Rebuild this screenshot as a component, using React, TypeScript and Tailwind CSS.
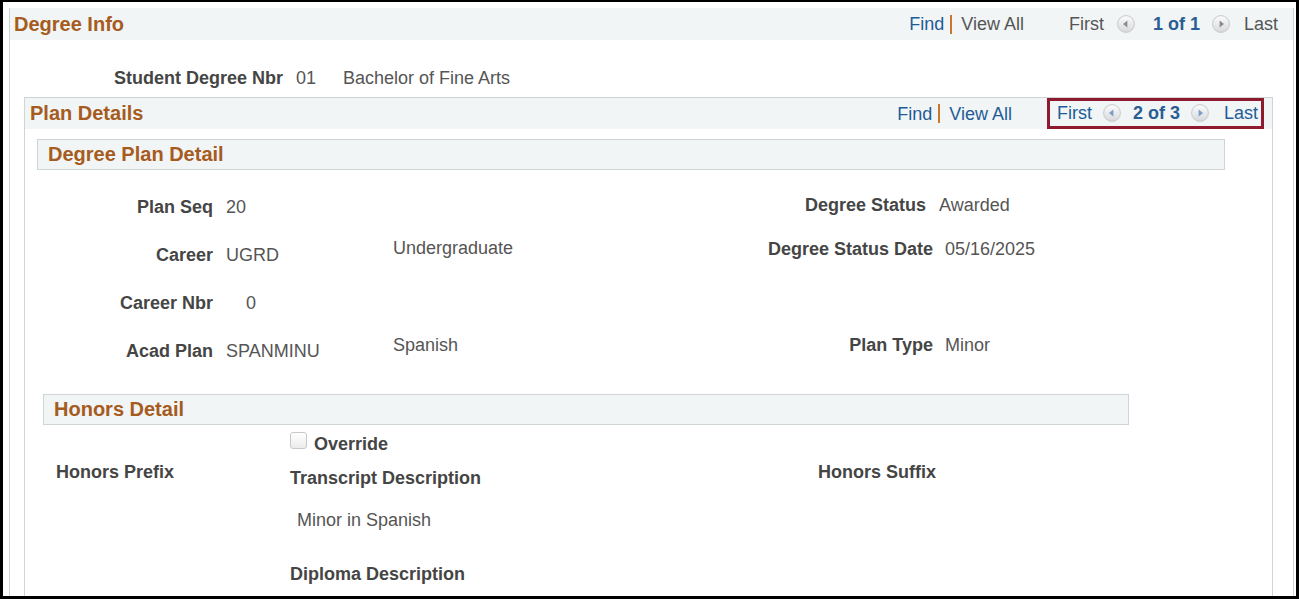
import React from "react";

function NavBtn({ dir, active }: { dir: "l" | "r"; active?: boolean }) {
  const fill = active ? "#7c9dc6" : "#8c8c8c";
  const id = `g${dir}${active ? 1 : 0}`;
  return (
    <svg width="18" height="18" viewBox="0 0 18 18" className="shrink-0">
      <defs>
        <linearGradient id={id} x1="0" y1="0" x2="0" y2="1">
          <stop offset="0" stopColor="#fcfcfc" />
          <stop offset="1" stopColor="#d6d8da" />
        </linearGradient>
      </defs>
      <circle cx="9" cy="9" r="8.4" fill={`url(#${id})`} stroke="#c6c9cc" strokeWidth="1" />
      {dir === "l" ? (
        <path d="M6 9 L10.4 5.5 L10.4 12.5 Z" fill={fill} />
      ) : (
        <path d="M12 9 L7.6 5.5 L7.6 12.5 Z" fill={fill} />
      )}
    </svg>
  );
}

function Sep() {
  return <span className="inline-block w-[2px] h-[19px] bg-[#c8772f] ml-[6px] mr-[9px]" />;
}

const label = "font-bold text-[18px] leading-[20px] text-[#454545] whitespace-nowrap";
const value = "text-[18px] leading-[20px] text-[#555555] whitespace-nowrap";
const sectionTitle = "font-bold text-[20px] leading-[24px] text-[#a65b20] whitespace-nowrap";

export default function App() {
  return (
    <div className="w-[1299px] h-[599px] overflow-hidden bg-white border-black border-l-[3px] border-t-2 border-r-[3px] border-b-[3px] font-['Liberation_Sans',Arial,sans-serif]">
      <div className="ml-[6px] mt-[6px] w-[1285px] h-[700px] border-x border-[#cfd4d6]">
        {/* Degree Info header */}
        <div className="h-[32px] bg-[#f1f5f6] flex items-center justify-between pl-[4px] pr-[15px]">
          <span className={sectionTitle}>Degree Info</span>
          <div className="flex items-center text-[18px] leading-[20px]">
            <span className="text-[#1f5c97]">Find</span>
            <Sep />
            <span className="text-[#555]">View All</span>
            <span className="text-[#555] ml-[45px]">First</span>
            <span className="ml-[13px] flex"><NavBtn dir="l" /></span>
            <span className="ml-[18px] font-bold text-[#2a5d93]">1 of 1</span>
            <span className="ml-[12px] flex"><NavBtn dir="r" /></span>
            <span className="ml-[14px] text-[#555]">Last</span>
          </div>
        </div>

        {/* Student Degree Nbr */}
        <div className="flex mt-[28px] h-[20px]">
          <div className={`${label} w-[273px] text-right`}>Student Degree Nbr</div>
          <div className={`${value} ml-[13px] w-[47px]`}>01</div>
          <div className={value}>Bachelor of Fine Arts</div>
        </div>

        {/* Plan Details box */}
        <div className="ml-[14px] mt-[9px] w-[1249px] h-[600px] border-x border-t border-[#cfd4d6]">
          <div className="h-[31px] bg-[#f1f5f6] flex items-center justify-between pl-[5px] pr-[8px]">
            <span className={`${sectionTitle} -mt-[2px]`}>Plan Details</span>
            <div className="flex items-center h-full text-[18px] leading-[20px]">
              <span className="text-[#1f5c97]">Find</span>
              <Sep />
              <span className="text-[#1f5c97]">View All</span>
              <div className="ml-[35px] h-[31px] border-[3px] border-[#8e1a2f] flex items-center pl-[7px] pr-[3px]">
                <span className="text-[#1f5c97] -mt-[2px]">First</span>
                <span className="ml-[11px] -mt-[2px] flex"><NavBtn dir="l" active /></span>
                <span className="ml-[12px] font-bold text-[#2a5d93] -mt-[2px]">2 of 3</span>
                <span className="ml-[11px] -mt-[2px] flex"><NavBtn dir="r" active /></span>
                <span className="ml-[15px] text-[#1f5c97] -mt-[2px]">Last</span>
              </div>
            </div>
          </div>

          {/* Degree Plan Detail */}
          <div className="ml-[12px] mt-[10px] w-[1188px] h-[31px] border border-[#cfd4d6] bg-[#f1f5f6] flex items-center pl-[10px]">
            <span className={`${sectionTitle} -mt-[2px]`}>Degree Plan Detail</span>
          </div>

          <div className="mt-[15px] flex flex-col">
            {/* Row 1 */}
            <div className="flex h-[48px] items-start">
              <div className={`${label} w-[188px] text-right pt-[12px]`}>Plan Seq</div>
              <div className={`${value} ml-[13px] w-[167px] pt-[12px]`}>20</div>
              <div className="w-[307px]" />
              <div className={`${label} w-[226px] text-right pt-[10px]`}>Degree Status</div>
              <div className={`${value} ml-[13px] pt-[10px]`}>Awarded</div>
            </div>
            {/* Row 2 */}
            <div className="flex h-[48px] items-start">
              <div className={`${label} w-[188px] text-right pt-[12px]`}>Career</div>
              <div className={`${value} ml-[13px] w-[167px] pt-[12px]`}>UGRD</div>
              <div className={`${value} w-[307px] pt-[5px]`}>Undergraduate</div>
              <div className={`${label} w-[233px] text-right pt-[6px]`}>Degree Status Date</div>
              <div className={`${value} ml-[12px] pt-[6px]`}>05/16/2025</div>
            </div>
            {/* Row 3 */}
            <div className="flex h-[48px] items-start">
              <div className={`${label} w-[188px] text-right pt-[12px]`}>Career Nbr</div>
              <div className={`${value} ml-[33px] pt-[12px]`}>0</div>
            </div>
            {/* Row 4 */}
            <div className="flex h-[48px] items-start">
              <div className={`${label} w-[188px] text-right pt-[12px]`}>Acad Plan</div>
              <div className={`${value} ml-[13px] w-[167px] pt-[12px]`}>SPANMINU</div>
              <div className={`${value} w-[307px] pt-[6px]`}>Spanish</div>
              <div className={`${label} w-[233px] text-right pt-[6px]`}>Plan Type</div>
              <div className={`${value} ml-[12px] pt-[6px]`}>Minor</div>
            </div>
          </div>

          {/* Honors Detail */}
          <div className="ml-[18px] mt-[17px] w-[1086px] h-[31px] border border-[#cfd4d6] bg-[#f1f5f6] flex items-center pl-[10px]">
            <span className={`${sectionTitle} -mt-[2px]`}>Honors Detail</span>
          </div>

          <div className="flex">
            <div className="ml-[31px] w-[234px] pt-[37px]">
              <div className={label}>Honors Prefix</div>
            </div>
            <div className="w-[528px] flex flex-col">
              <div className="flex items-start mt-[7px] h-[20px]">
                <span className="w-[17px] h-[17px] rounded-[3px] border border-[#c9c9c9] bg-gradient-to-b from-white to-[#ececec]" />
                <span className={`${label} ml-[7px] mt-[2px]`}>Override</span>
              </div>
              <div className={`${label} mt-[16px]`}>Transcript Description</div>
              <div className={`${value} mt-[22px] pl-[7px]`}>Minor in Spanish</div>
              <div className={`${label} mt-[34px]`}>Diploma Description</div>
            </div>
            <div className="pt-[37px]">
              <div className={label}>Honors Suffix</div>
            </div>
          </div>
        </div>
      </div>
    </div>
  );
}
